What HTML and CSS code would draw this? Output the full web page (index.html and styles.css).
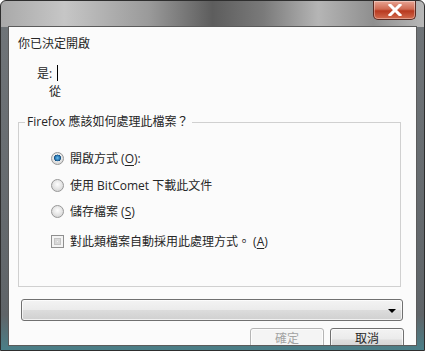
FILE: index.html
```html
<!DOCTYPE html>
<html lang="zh-Hant">
  <head>
    <meta charset="UTF-8" />
    <title>開啟檔案</title>
    <link rel="stylesheet" href="styles.css">
  </head>
  <body>
    <div class="window">
      <div class="titlebar">
        <div class="close-btn">
          <svg width="16" height="12" viewBox="0 0 16 12">
            <path d="M3 1 L13 11 M13 1 L3 11" stroke="#fff" stroke-width="3" stroke-linecap="square"/>
          </svg>
        </div>
      </div>

      <div class="client">
        <div class="heading">你已決定開啟</div>
        <div class="info-row first">
          <span class="label-is">是:</span>
          <span class="caret"></span>
        </div>
        <div class="info-row">
          <span class="label-from">從</span>
        </div>

        <fieldset class="group">
          <legend>Firefox 應該如何處理此檔案？</legend>
          <div class="option opt-open">
            <span class="radio checked"></span>
            <span>開啟方式 (<u>O</u>):</span>
          </div>
          <div class="option opt-bt">
            <span class="radio"></span>
            <span>使用 BitComet 下載此文件</span>
          </div>
          <div class="option opt-save">
            <span class="radio"></span>
            <span>儲存檔案 (<u>S</u>)</span>
          </div>
          <div class="option opt-auto">
            <span class="checkbox"></span>
            <span>對此類檔案自動採用此處理方式。 (<u>A</u>)</span>
          </div>
        </fieldset>

        <div class="dropdown">
          <span class="arrow"></span>
        </div>

        <div class="buttons">
          <div class="btn disabled">確定</div>
          <div class="btn">取消</div>
        </div>
      </div>
    </div>
  </body>
</html>
```

FILE: styles.css
```css
body {
  margin: 0;
  padding: 0;
  width: 425px;
  height: 351px;
  overflow: hidden;
  font-family: "Open Sans", "Noto Sans CJK TC", sans-serif;
  font-size: 12px;
  color: #262626;
}

.window {
  box-sizing: border-box;
  width: 425px;
  height: 351px;
  padding: 0 7px 5px 7px;
  border: 1px solid #2e2e2e;
  border-radius: 6px 6px 0 0;
  background:
    linear-gradient(to bottom, rgba(0, 0, 0, 0) 0, rgba(0, 0, 0, 0) 26px, #6f7478 26px, #5f6468 90%, #4a7f88 100%),
    linear-gradient(to right, #a9a9a9, #c6c6c6 15%, #9a9a9a 35%, #5d5d5d 50%, #7a7a7a 62%, #b5b5b5 75%, #8f8f8f 88%, #b8b8b8);
}

.titlebar {
  height: 25px;
  display: flex;
  justify-content: flex-end;
  padding-right: 1px;
}

.close-btn {
  width: 41px;
  height: 18px;
  display: flex;
  align-items: center;
  justify-content: center;
  border: 1px solid #5a2a22;
  border-top: none;
  border-radius: 0 0 5px 5px;
  background: linear-gradient(to bottom, #e8a493, #cf6a52 45%, #b8391f 55%, #d26b4e);
  box-shadow: inset 0 0 0 1px rgba(255, 255, 255, 0.35);
}

.client {
  box-sizing: border-box;
  height: 320px;
  background: #fbfbfb;
  border: 1px solid #5b5b5b;
  overflow: hidden;
}

.heading {
  line-height: 16px;
  margin: 9px 0 0 9px;
}

.info-row {
  display: flex;
  align-items: center;
  height: 18px;
}

.info-row.first {
  margin-top: 12px;
}

.label-is {
  margin-left: 28px;
}

.caret {
  width: 1px;
  height: 16px;
  background: #000;
  margin-left: 5px;
}

.label-from {
  margin-left: 40px;
}

.group {
  box-sizing: border-box;
  height: 173px;
  margin: 14px 15px 0 9px;
  padding: 0;
  border: 1px solid #d0d0d0;
  border-radius: 0;
}

.group legend {
  line-height: 16px;
  margin-left: 6px;
  padding: 0 3px 0 2px;
}

.option {
  display: flex;
  align-items: center;
  gap: 6px;
  height: 20px;
  margin-left: 32px;
}

.opt-open { margin-top: 18px; }
.opt-bt { margin-top: 7px; }
.opt-save { margin-top: 6px; }
.opt-auto { margin-top: 10px; }

.option u {
  text-underline-offset: 2px;
}

.radio {
  box-sizing: border-box;
  width: 13px;
  height: 13px;
  border-radius: 50%;
  border: 1px solid #979797;
  background: radial-gradient(circle at 50% 40%, #fdfdfd 0, #e3e3e3 55%, #c9c9c9 100%);
}

.radio.checked {
  background:
    radial-gradient(circle at 50% 45%, #6fc0ec 0, #2a78b5 28%, #154c7a 40%, transparent 44%),
    radial-gradient(circle at 50% 40%, #fdfdfd 0, #e3e3e3 55%, #c9c9c9 100%);
}

.checkbox {
  box-sizing: border-box;
  width: 13px;
  height: 13px;
  border: 1px solid #8f8f8f;
  background: #f4f4f4;
  box-shadow: inset 0 0 0 2px #f4f4f4, inset 0 0 0 3px #c4c4c4, inset 0 0 0 5px #d8d8d8;
}

.dropdown {
  box-sizing: border-box;
  height: 22px;
  margin: 12px 13px 0 12px;
  border: 1px solid #707070;
  border-radius: 3px;
  background: linear-gradient(to bottom, #f3f3f3, #ebebeb 48%, #dcdcdc 52%, #d0d0d0);
  box-shadow: inset 0 0 0 1px rgba(255, 255, 255, 0.7);
  display: flex;
  align-items: center;
  justify-content: flex-end;
  padding-right: 6px;
}

.arrow {
  width: 0;
  height: 0;
  border-left: 4px solid transparent;
  border-right: 4px solid transparent;
  border-top: 4px solid #000;
  margin-top: 1px;
}

.buttons {
  display: flex;
  justify-content: flex-end;
  gap: 6px;
  margin: 7px 12px 0 0;
}

.btn {
  box-sizing: border-box;
  width: 74px;
  height: 23px;
  border: 1px solid #707070;
  border-radius: 3px;
  background: linear-gradient(to bottom, #f3f3f3, #ebebeb 48%, #dddddd 52%, #cfcfcf);
  box-shadow: inset 0 0 0 1px rgba(255, 255, 255, 0.7);
  text-align: center;
  line-height: 20px;
}

.btn.disabled {
  border-color: #b5b5b5;
  background: #f4f4f4;
  color: #a3a3a3;
}
```
